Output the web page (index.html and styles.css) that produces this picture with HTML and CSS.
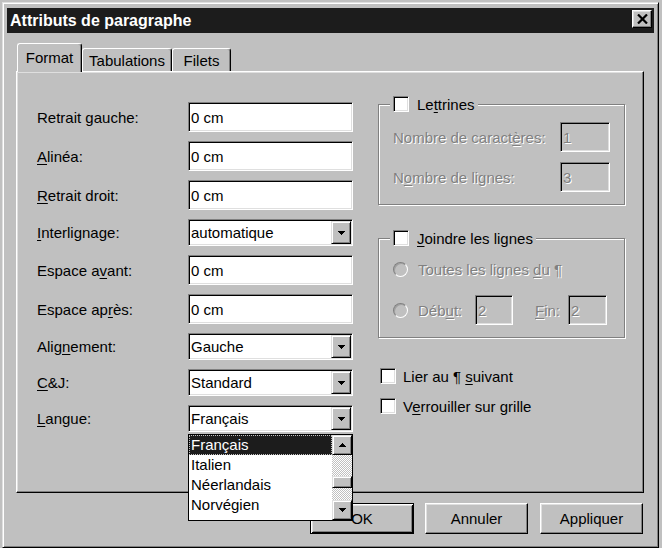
FILE: index.html
```html
<!DOCTYPE html>
<html lang="fr">
<head>
<meta charset="utf-8">
<title>Attributs de paragraphe</title>
<link rel="stylesheet" href="styles.css">
</head>
<body>
<div class="window">
  <div class="titlebar">
    <span class="title">Attributs de paragraphe</span>
    <span class="close"><svg width="11" height="10" viewBox="0 0 11 10"><path d="M1 0.5 L10 9.5 M10 0.5 L1 9.5" stroke="#000" stroke-width="2.2" fill="none"/></svg></span>
  </div>

  <div class="tabs">
    <div class="tab tab-format active">Format</div>
    <div class="tab tab-tabul">Tabulations</div>
    <div class="tab tab-filets">Filets</div>
  </div>

  <div class="panel">
    <div class="left">
      <div class="row"><span class="label">Retrait <u>g</u>auche:</span><div class="edit">0 cm</div></div>
      <div class="row"><span class="label"><u>A</u>linéa:</span><div class="edit">0 cm</div></div>
      <div class="row"><span class="label"><u>R</u>etrait droit:</span><div class="edit">0 cm</div></div>
      <div class="row"><span class="label"><u>I</u>nterlignage:</span>
        <div class="combo"><span class="combo-text">automatique</span><span class="combo-btn"><svg width="7" height="4" viewBox="0 0 7 4" shape-rendering="crispEdges"><polygon points="0,0 7,0 3.5,4" fill="#000"/></svg></span></div></div>
      <div class="row"><span class="label">Espace a<u>v</u>ant:</span><div class="edit">0 cm</div></div>
      <div class="row"><span class="label">Espace ap<u>r</u>ès:</span><div class="edit">0 cm</div></div>
      <div class="row"><span class="label">Alig<u>n</u>ement:</span>
        <div class="combo"><span class="combo-text">Gauche</span><span class="combo-btn"><svg width="7" height="4" viewBox="0 0 7 4" shape-rendering="crispEdges"><polygon points="0,0 7,0 3.5,4" fill="#000"/></svg></span></div></div>
      <div class="row"><span class="label"><u>C</u>&amp;J:</span>
        <div class="combo"><span class="combo-text">Standard</span><span class="combo-btn"><svg width="7" height="4" viewBox="0 0 7 4" shape-rendering="crispEdges"><polygon points="0,0 7,0 3.5,4" fill="#000"/></svg></span></div></div>
      <div class="row"><span class="label"><u>L</u>angue:</span>
        <div class="combo-wrap">
          <div class="combo"><span class="combo-text">Français</span><span class="combo-btn"><svg width="7" height="4" viewBox="0 0 7 4" shape-rendering="crispEdges"><polygon points="0,0 7,0 3.5,4" fill="#000"/></svg></span></div>
          <div class="dropdown">
            <div class="items">
              <div class="item selected">Français</div>
              <div class="item">Italien</div>
              <div class="item">Néerlandais</div>
              <div class="item">Norvégien</div>
            </div>
            <div class="vscroll">
              <div class="sbtn"><svg width="7" height="4" viewBox="0 0 7 4" shape-rendering="crispEdges"><polygon points="0,4 7,4 3.5,0" fill="#000"/></svg></div>
              <div class="track track-a"></div>
              <div class="thumb"></div>
              <div class="track track-b"></div>
              <div class="sbtn"><svg width="7" height="4" viewBox="0 0 7 4" shape-rendering="crispEdges"><polygon points="0,0 7,0 3.5,4" fill="#000"/></svg></div>
            </div>
          </div>
        </div>
      </div>
    </div>

    <div class="right">
      <fieldset class="group group-lettrines">
        <legend class="legend"><span class="check"></span><span>Le<u>t</u>trines</span></legend>
        <div class="frow frow-first">
          <span class="disabled">Nombre de caract<u>è</u>res:</span>
          <div class="dbox">1</div>
        </div>
        <div class="frow">
          <span class="disabled">N<u>o</u>mbre de lignes:</span>
          <div class="dbox">3</div>
        </div>
      </fieldset>

      <fieldset class="group group-joindre">
        <legend class="legend"><span class="check"></span><span><u>J</u>oindre les lignes</span></legend>
        <div class="rrow rrow-first">
          <span class="radio"></span>
          <span class="disabled">Toutes les lignes <u>d</u>u ¶</span>
        </div>
        <div class="rrow rrow-debut">
          <span class="radio"></span>
          <span class="disabled debut-label">Déb<u>u</u>t:</span>
          <div class="dbox dbox-small">2</div>
          <span class="disabled fin-label"><u>F</u>in:</span>
          <div class="dbox dbox-fin">2</div>
        </div>
      </fieldset>

      <div class="crow crow-first"><span class="check"></span><span>Lier au ¶ <u>s</u>uivant</span></div>
      <div class="crow"><span class="check"></span><span>V<u>e</u>rrouiller sur grille</span></div>
    </div>
  </div>

  <div class="buttons">
    <div class="btn btn-default">OK</div>
    <div class="btn">Annuler</div>
    <div class="btn btn-last">Appliquer</div>
  </div>
</div>
</body>
</html>
```
FILE: styles.css
```css
* { box-sizing: border-box; }
html, body { margin: 0; padding: 0; }
body {
  background: #c0c0c0;
  font-family: "Liberation Sans", Arial, sans-serif;
  font-size: 15px;
  color: #000;
  width: 662px;
  height: 548px;
  overflow: hidden;
}
u { text-decoration: underline; text-underline-offset: 2px; }

.window {
  margin: 2px 0 0 2px;
  width: 657px;
  height: 546px;
  border: 1px solid;
  border-color: #dfdfdf #000 #000 #dfdfdf;
  box-shadow: inset 1px 1px #fff, inset -1px -1px #808080;
  padding: 5px 4px 4px 4px;
  display: flex;
  flex-direction: column;
}

.titlebar {
  height: 25px;
  flex: none;
  background: #1c1c1c;
  display: flex;
  align-items: center;
  justify-content: space-between;
  padding: 0 2px 0 3px;
}
.title { color: #fff; font-weight: bold; font-size: 16px; }
.close {
  width: 20px;
  height: 18px;
  margin-top: -3px;
  background: #c0c0c0;
  border: 1px solid;
  border-color: #fff #000 #000 #fff;
  box-shadow: inset -1px -1px #808080, inset 1px 1px #dfdfdf;
  display: flex;
  align-items: center;
  justify-content: center;
}

.tabs {
  display: flex;
  align-items: flex-end;
  height: 28px;
  margin: 10px 0 0 10px;
  position: relative;
  z-index: 1;
  flex: none;
}
.tab {
  height: 23px;
  background: #c0c0c0;
  border: 1px solid #fff;
  border-bottom: none;
  border-right-color: #000;
  border-radius: 3px 3px 0 0;
  box-shadow: inset -1px 0 #808080;
  display: flex;
  align-items: center;
  justify-content: center;
  padding-top: 1px;
}
.tab.active { height: 29px; margin-bottom: -1px; padding-top: 0; padding-bottom: 1px; }
.tab-format { width: 65px; }
.tab-tabul { width: 90px; }
.tab-filets { width: 59px; }

.panel {
  margin: 0 10px 0 9px;
  height: 422px;
  flex: none;
  border: 1px solid;
  border-color: #fff #000 #000 #fff;
  box-shadow: inset -1px -1px #808080, inset 1px 1px #dfdfdf;
  display: flex;
}

.left {
  width: 336px;
  padding: 30px 0 0 20px;
  display: flex;
  flex-direction: column;
  gap: 9px;
}
.row { display: flex; align-items: center; }
.label { width: 151px; flex: none; }

.edit, .combo, .dbox {
  border: 1px solid;
  border-color: #808080 #fff #fff #808080;
  box-shadow: inset 1px 1px #000, inset -1px -1px #dfdfdf;
}
.edit {
  width: 165px;
  height: 30px;
  background: #fff;
  padding: 0 2px;
  display: flex;
  align-items: center;
}
.combo {
  width: 165px;
  height: 27px;
  background: #fff;
  padding: 1px 1px 1px 2px;
  display: flex;
  align-items: center;
}
.combo-text { flex: 1; }
.combo-btn {
  width: 20px;
  height: 100%;
  background: #c0c0c0;
  border: 1px solid;
  border-color: #dfdfdf #000 #000 #dfdfdf;
  box-shadow: inset 1px 1px #fff, inset -1px -1px #808080;
  display: flex;
  align-items: center;
  justify-content: center;
}
.combo-btn svg, .sbtn svg { display: block; }

.combo-wrap { position: relative; }
.dropdown {
  position: absolute;
  left: 0;
  top: 100%;
  margin-top: 2px;
  width: 165px;
  height: 87px;
  background: #fff;
  border: 1px solid #000;
  display: flex;
  z-index: 5;
}
.items { flex: 1; }
.item {
  height: 20px;
  line-height: 20px;
  padding-left: 2px;
}
.item.selected {
  background: #1c1c1c;
  color: #fff;
  outline: 1px dotted #c0c0c0;
  outline-offset: -1px;
}
.vscroll {
  width: 20px;
  display: flex;
  flex-direction: column;
}
.sbtn, .thumb {
  background: #c0c0c0;
  border: 1px solid;
  border-color: #dfdfdf #000 #000 #dfdfdf;
  box-shadow: inset 1px 1px #fff, inset -1px -1px #808080;
}
.sbtn {
  height: 20px;
  display: flex;
  align-items: center;
  justify-content: center;
}
.thumb { height: 12px; }
.track {
  background-color: #c0c0c0;
  background-image: conic-gradient(#fff 25%, #c0c0c0 0 50%, #fff 0 75%, #c0c0c0 0);
  background-size: 2px 2px;
}
.track-a { height: 21px; }
.track-b { flex: 1; }

.right {
  width: 247px;
  margin-left: 25px;
  padding-top: 23px;
  display: flex;
  flex-direction: column;
}
.group {
  margin: 0;
  min-width: 0;
  border: 1px solid #808080;
  box-shadow: 1px 1px #fff, inset 1px 1px #fff;
  padding: 0 14px 12px 14px;
}
.legend {
  display: flex;
  align-items: center;
  gap: 8px;
  height: 18px;
  padding: 0 3px;
  margin-left: -3px;
  background: #c0c0c0;
}
.check {
  width: 16px;
  height: 16px;
  flex: none;
  background: #fff;
  border: 1px solid;
  border-color: #808080 #fff #fff #808080;
  box-shadow: inset 1px 1px #000, inset -1px -1px #dfdfdf;
}
.disabled { color: #808080; text-shadow: 1px 1px 0 #fff; }

.frow {
  display: flex;
  align-items: center;
  justify-content: space-between;
  height: 30px;
  margin-top: 10px;
}
.frow-first { margin-top: 9px; }
.dbox {
  width: 50px;
  height: 30px;
  background: #c0c0c0;
  padding: 0 2px;
  display: flex;
  align-items: center;
  color: #808080;
  text-shadow: 1px 1px 0 #fff;
}
.dbox-small { width: 38px; }
.dbox-fin { width: 39px; }

.group-joindre { margin-top: 24px; }
.rrow {
  display: flex;
  align-items: center;
  gap: 10px;
}
.rrow-first { height: 20px; margin-top: 12px; }
.rrow-debut { height: 30px; margin-top: 16px; gap: 0; }
.rrow-debut .radio { margin-right: 10px; }
.radio {
  width: 15px;
  height: 15px;
  flex: none;
  border-radius: 50%;
  background: #c0c0c0;
  border: 1px solid;
  border-color: #808080 #fff #fff #808080;
  box-shadow: inset 1px 1px #a0a0a0;
}
.debut-label { width: 57px; }
.fin-label { width: 33px; margin-left: 22px; }

.crow {
  display: flex;
  align-items: center;
  gap: 7px;
  height: 20px;
  margin: 10px 0 0 2px;
}
.crow-first { margin-top: 28px; }

.buttons {
  display: flex;
  justify-content: flex-end;
  gap: 11px;
  margin: 10px 11px 0 0;
  flex: none;
}
.btn {
  width: 103px;
  height: 31px;
  background: #c0c0c0;
  border: 1px solid;
  border-color: #fff #000 #000 #fff;
  box-shadow: inset -1px -1px #808080, inset 1px 1px #dfdfdf;
  display: flex;
  align-items: center;
  justify-content: center;
}
.btn-last { margin-left: 1px; }
.btn-default {
  width: 104px;
  border: 1px solid #000;
  box-shadow: inset 1px 1px #fff, inset -1px -1px #000, inset 2px 2px #dfdfdf, inset -2px -2px #808080;
}
```
